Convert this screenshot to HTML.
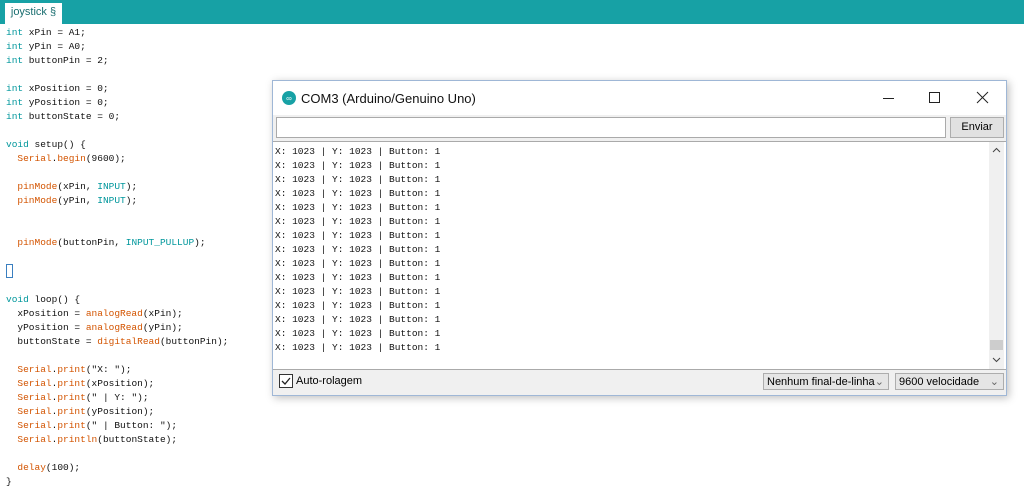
<!DOCTYPE html><html><head><style>
body{margin:0;width:1024px;height:489px;background:#fff;position:relative;overflow:hidden;font-family:"Liberation Mono",monospace}
.hdr{position:absolute;left:0;top:0;width:1024px;height:24px;background:#17a1a5}
.tab{position:absolute;left:5px;top:3px;width:57px;height:21px;background:#fff;font:11px "Liberation Sans",sans-serif;color:#1a6e70;text-align:center;line-height:19px}
.code{position:absolute;left:6px;top:26px;font-size:9.5px;line-height:14px;white-space:pre;color:#111}
.k{color:#00979c}.o{color:#d35400}
.cur{display:inline-block;width:5px;height:12px;border:1px solid #3a7fc0;vertical-align:middle}
.win{position:absolute;left:272px;top:80px;width:733px;height:314px;border:1px solid #9fb7d6;background:#f0f0f0;box-shadow:2px 2px 8px rgba(0,0,0,.25);font-family:"Liberation Sans",sans-serif}
.tb{position:absolute;left:0;top:0;width:733px;height:34px;background:#fff}
.title{position:absolute;left:28px;top:10px;font-size:13px;color:#111}
.inp{position:absolute;left:3px;top:36px;width:668px;height:19px;background:#fff;border:1px solid #aaa}
.btn{position:absolute;left:677px;top:36px;width:52px;height:19px;background:#e1e1e1;border:1px solid #adadad;font-size:11px;text-align:center;line-height:19px}
.out{position:absolute;left:0;top:60px;width:733px;height:227px;background:#fff;border-top:1px solid #aaa;border-bottom:1px solid #aaa}
.lines{position:absolute;left:2px;top:3px;font-family:"Liberation Mono",monospace;font-size:9.5px;line-height:14px;white-space:pre;color:#111}
.sb{position:absolute;right:2px;top:0;width:15px;height:227px;background:#f0f0f0}
.sel{position:absolute;top:292px;height:17px;border:1px solid #adadad;background:#e5e5e5;font-size:11px;line-height:17px;padding-left:3px;box-sizing:border-box}
</style></head><body>
<div class="hdr"><div class="tab">joystick §</div></div>
<div class="code"><span class="k">int</span> xPin = A1;
<span class="k">int</span> yPin = A0;
<span class="k">int</span> buttonPin = 2;

<span class="k">int</span> xPosition = 0;
<span class="k">int</span> yPosition = 0;
<span class="k">int</span> buttonState = 0;

<span class="k">void</span> setup() {
  <span class="o">Serial</span>.<span class="o">begin</span>(9600);

  <span class="o">pinMode</span>(xPin, <span class="k">INPUT</span>);
  <span class="o">pinMode</span>(yPin, <span class="k">INPUT</span>);


  <span class="o">pinMode</span>(buttonPin, <span class="k">INPUT_PULLUP</span>);

<span class="cur"></span>

<span class="k">void</span> loop() {
  xPosition = <span class="o">analogRead</span>(xPin);
  yPosition = <span class="o">analogRead</span>(yPin);
  buttonState = <span class="o">digitalRead</span>(buttonPin);

  <span class="o">Serial</span>.<span class="o">print</span>("X: ");
  <span class="o">Serial</span>.<span class="o">print</span>(xPosition);
  <span class="o">Serial</span>.<span class="o">print</span>(" | Y: ");
  <span class="o">Serial</span>.<span class="o">print</span>(yPosition);
  <span class="o">Serial</span>.<span class="o">print</span>(" | Button: ");
  <span class="o">Serial</span>.<span class="o">println</span>(buttonState);

  <span class="o">delay</span>(100);
}</div>
<div class="win">
<div class="tb">
<svg style="position:absolute;left:9px;top:10px" width="14" height="14"><circle cx="7" cy="7" r="7" fill="#17a1a5"/><text x="7" y="10" font-size="8" fill="#fff" text-anchor="middle" font-family="Liberation Sans">∞</text></svg>
<div class="title">COM3 (Arduino/Genuino Uno)</div>
<svg style="position:absolute;left:600px;top:8px" width="130" height="18" stroke="#222" fill="none" stroke-width="1"><path d="M10 9.5h11"/><rect x="56.5" y="3.5" width="10" height="10"/><path d="M104 3l11 11M115 3l-11 11"/></svg>
</div>
<div class="inp"></div><div class="btn">Enviar</div>
<div class="out"><div class="lines">X: 1023 | Y: 1023 | Button: 1
X: 1023 | Y: 1023 | Button: 1
X: 1023 | Y: 1023 | Button: 1
X: 1023 | Y: 1023 | Button: 1
X: 1023 | Y: 1023 | Button: 1
X: 1023 | Y: 1023 | Button: 1
X: 1023 | Y: 1023 | Button: 1
X: 1023 | Y: 1023 | Button: 1
X: 1023 | Y: 1023 | Button: 1
X: 1023 | Y: 1023 | Button: 1
X: 1023 | Y: 1023 | Button: 1
X: 1023 | Y: 1023 | Button: 1
X: 1023 | Y: 1023 | Button: 1
X: 1023 | Y: 1023 | Button: 1
X: 1023 | Y: 1023 | Button: 1</div>
<div class="sb"><svg width="15" height="227" stroke="#444" fill="none"><path d="M4 10l3.5-3.5L11 10M4 216l3.5 3.5L11 216"/><rect x="1" y="198" width="13" height="10" fill="#cdcdcd" stroke="none"/></svg></div>
</div>
<svg style="position:absolute;left:6px;top:293px" width="14" height="14"><rect x=".5" y=".5" width="13" height="13" fill="#fff" stroke="#333"/><path d="M3 7l3 3 5-6" stroke="#222" fill="none" stroke-width="1.3"/></svg>
<div style="position:absolute;left:23px;top:294px;font-size:11px">Auto-rolagem</div>
<div class="sel" style="left:490px;width:126px">Nenhum final-de-linha <span style="float:right;margin-right:4px;color:#666">⌄</span></div>
<div class="sel" style="left:622px;width:109px">9600 velocidade <span style="float:right;margin-right:4px;color:#666">⌄</span></div>
</div>
</body></html>
